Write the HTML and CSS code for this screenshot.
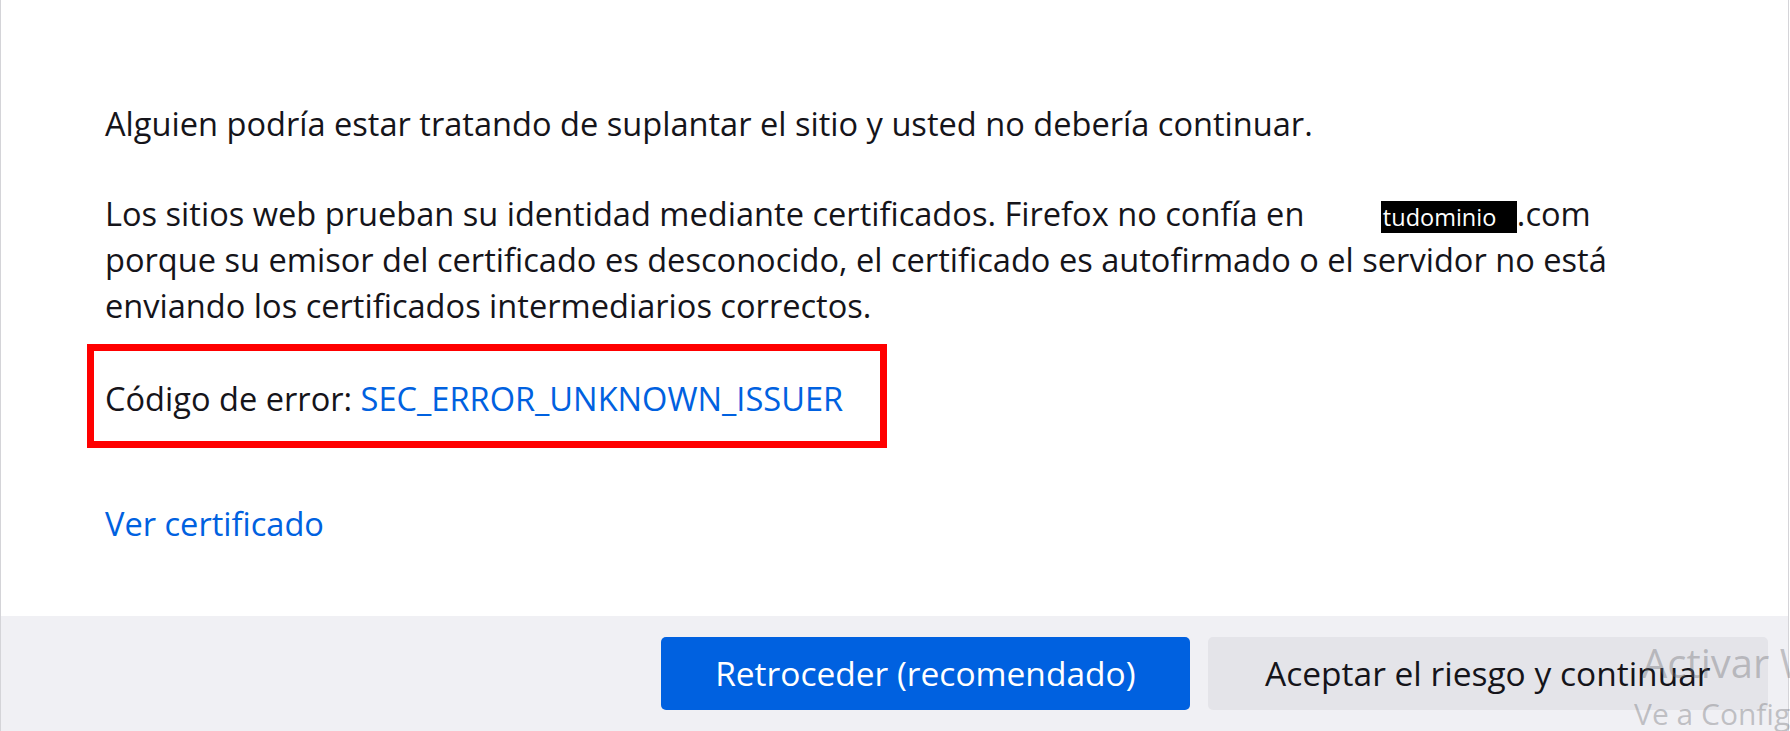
FILE: index.html
```html
<!DOCTYPE html>
<html lang="es">
<head>
<meta charset="utf-8">
<title>Advertencia: riesgo potencial de seguridad</title>
<link rel="stylesheet" href="styles.css">
</head>
<body>
<div class="panel">
  <div class="content">
    <p class="para">Alguien podría estar tratando de suplantar el sitio y usted no debería continuar.</p>
    <p class="para para-gap">Los sitios web prueban su identidad mediante certificados. Firefox no confía en <span class="mask">tudominio</span>.com porque su emisor del certificado es desconocido, el certificado es autofirmado o el servidor no está enviando los certificados intermediarios correctos.</p>
    <div class="errbox">
      <p class="para">Código de error: <a class="link" href="#">SEC_ERROR_UNKNOWN_ISSUER</a></p>
    </div>
    <p class="para cert"><a class="link" href="#">Ver certificado</a></p>
  </div>
  <div class="footer">
    <button class="btn btn-primary">Retroceder (recomendado)</button>
    <button class="btn btn-secondary">Aceptar el riesgo y continuar</button>
  </div>
</div>
<div class="watermark">
  <div class="wm-title">Activar Windows</div>
  <div class="wm-sub">Ve a Configuración para activar Windows.</div>
</div>
</body>
</html>
```
FILE: styles.css
```css
html, body {
  margin: 0;
  padding: 0;
  height: 100%;
  overflow: hidden;
  background: #ffffff;
}

body {
  font-family: "Open Sans", "Noto Sans", sans-serif;
  color: #15141a;
  position: relative;
}

.panel {
  box-sizing: border-box;
  width: 1789px;
  height: 731px;
  border-left: 1px solid #d4d4d8;
  border-right: 1px solid #d4d4d8;
  display: flex;
  flex-direction: column;
}

.content {
  padding: 101.4px 0 0 104px;
  max-width: 1560px;
}

.para {
  margin: 0;
  font-size: 32.6px;
  line-height: 45.7px;
}

.para-gap {
  margin-top: 44.3px;
}

.mask {
  display: inline-block;
  box-sizing: border-box;
  width: 136px;
  height: 32px;
  margin-left: 68px;
  padding-left: 2px;
  background: #000000;
  color: #ffffff;
  font-size: 23.5px;
  line-height: 32px;
}

.errbox {
  box-sizing: border-box;
  width: 800px;
  margin: 15.3px 0 0 -18px;
  padding: 25.6px 11px 18.7px;
  border: 7px solid #ff0000;
}

.link {
  color: #0061e0;
  text-decoration: none;
}

.cert {
  margin-top: 53.6px;
}

.footer {
  margin-top: auto;
  height: 115px;
  box-sizing: border-box;
  background: #f0f0f4;
  display: flex;
  justify-content: flex-end;
  align-items: flex-start;
  gap: 18px;
  padding: 21px 20px 0 0;
}

.btn {
  height: 73px;
  border: none;
  border-radius: 5px;
  padding: 0 54px;
  font-family: "Open Sans", "Noto Sans", sans-serif;
  font-size: 33.5px;
  line-height: 73px;
  cursor: pointer;
}

.btn-primary {
  background: #0061e0;
  color: #ffffff;
}

.btn-secondary {
  background: #e4e4e9;
  color: #15141a;
  padding: 0 57.5px;
}

.watermark {
  position: absolute;
  left: 1634px;
  top: 642.5px;
  color: rgba(110, 110, 115, 0.38);
  white-space: nowrap;
  pointer-events: none;
}

.wm-title {
  font-size: 40px;
  line-height: 40px;
  padding-left: 8px;
}

.wm-sub {
  margin-top: 17.5px;
  font-size: 30px;
  line-height: 28px;
}
```
